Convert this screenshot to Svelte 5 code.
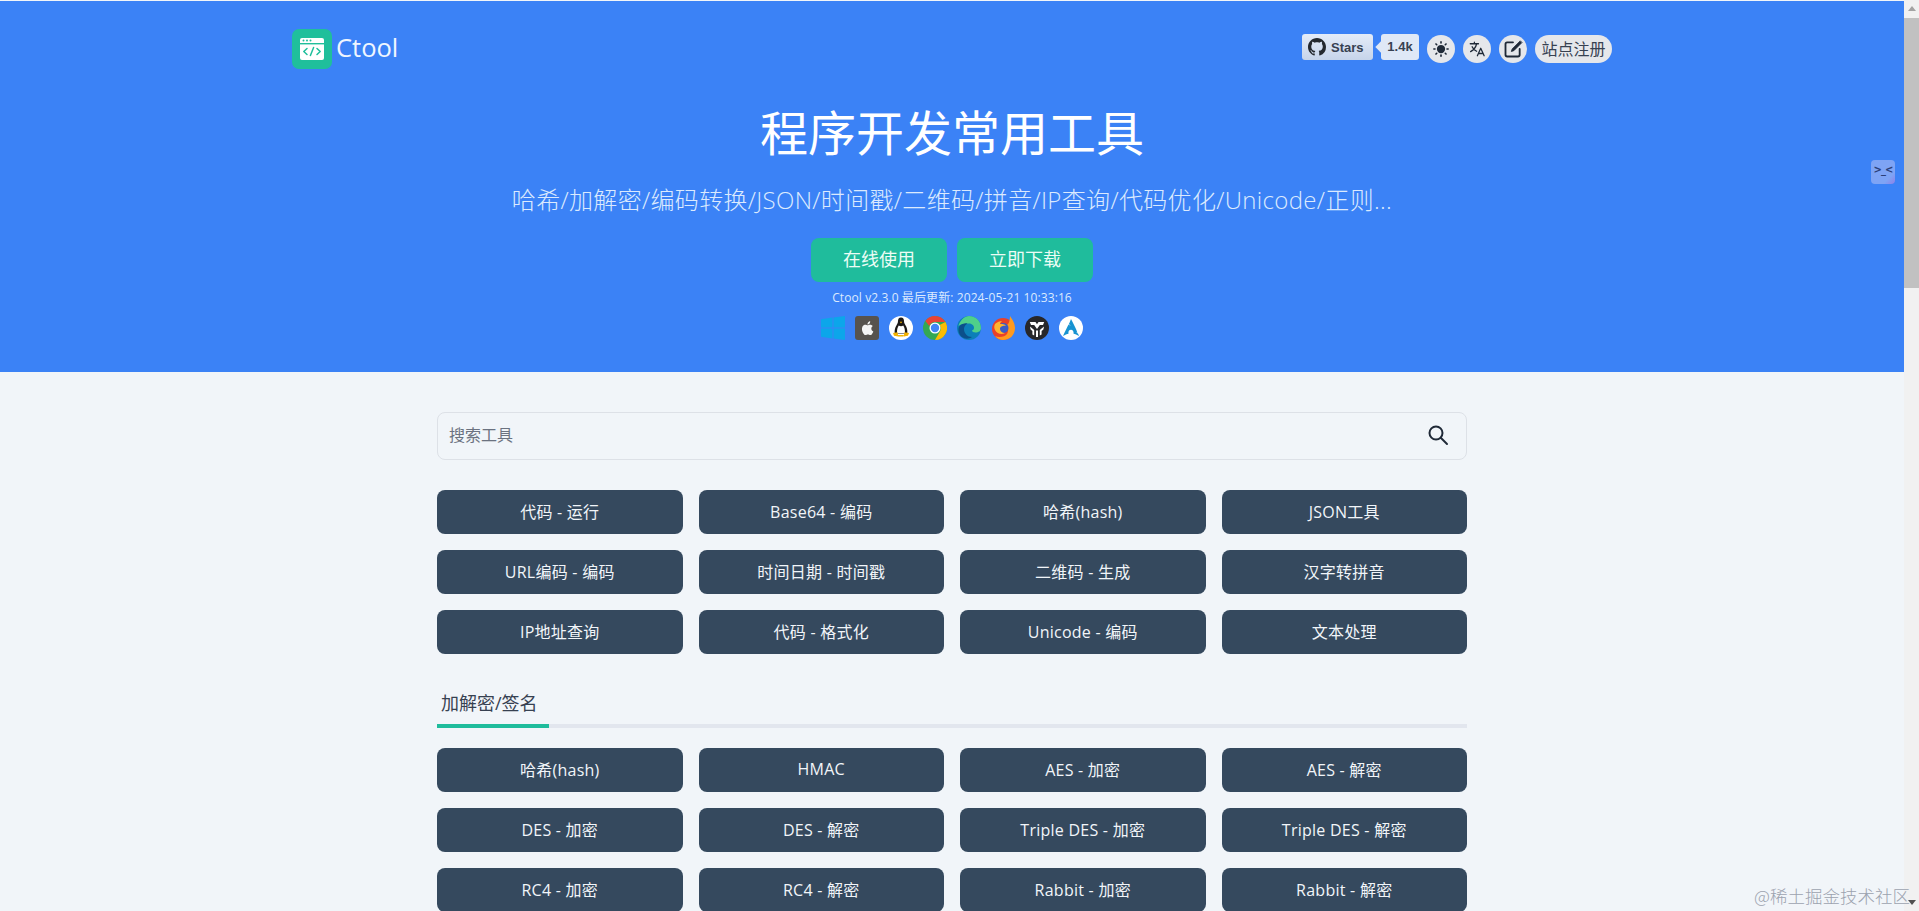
<script lang="ts">
  const hotTools = [
    "代码 - 运行", "Base64 - 编码", "哈希(hash)", "JSON工具",
    "URL编码 - 编码", "时间日期 - 时间戳", "二维码 - 生成", "汉字转拼音",
    "IP地址查询", "代码 - 格式化", "Unicode - 编码", "文本处理",
  ];
  const cryptoTools = [
    "哈希(hash)", "HMAC", "AES - 加密", "AES - 解密",
    "DES - 加密", "DES - 解密", "Triple DES - 加密", "Triple DES - 解密",
    "RC4 - 加密", "RC4 - 解密", "Rabbit - 加密", "Rabbit - 解密",
  ];
</script>

<div class="page">
  <div class="content">
    <header class="hero">
      <nav class="nav">
        <a class="brand" href="#top">
          <span class="logo">
            <svg width="26" height="24" viewBox="0 0 26 24">
              <rect x="1" y="1" width="24" height="22" rx="2" fill="#fff" />
              <rect x="1" y="6" width="24" height="1.4" fill="#1fbf9b" />
              <circle cx="4.5" cy="3.6" r="1" fill="#1fbf9b" />
              <circle cx="8" cy="3.6" r="1" fill="#1fbf9b" />
              <circle cx="11.5" cy="3.6" r="1" fill="#1fbf9b" />
              <path d="M8 11.5 4.8 14.5 8 17.5M18 11.5l3.2 3-3.2 3M14.6 10.5l-3.2 8" fill="none" stroke="#1fbf9b" stroke-width="1.5" stroke-linecap="round" stroke-linejoin="round" />
            </svg>
          </span>
          <span class="brand-name">Ctool</span>
        </a>
        <div class="actions">
          <span class="gh-btn">
            <svg width="18" height="18" viewBox="0 0 16 16"><path fill="#24292f" d="M8 0C3.58 0 0 3.58 0 8c0 3.54 2.29 6.53 5.47 7.59.4.07.55-.17.55-.38 0-.19-.01-.82-.01-1.49-2.01.37-2.53-.49-2.69-.94-.09-.23-.48-.94-.82-1.13-.28-.15-.68-.52-.01-.53.63-.01 1.08.58 1.23.82.72 1.21 1.87.87 2.33.66.07-.52.28-.87.51-1.07-1.78-.2-3.64-.89-3.64-3.95 0-.87.31-1.59.82-2.15-.08-.2-.36-1.02.08-2.12 0 0 .67-.21 2.2.82.64-.18 1.32-.27 2-.27s1.36.09 2 .27c1.53-1.04 2.2-.82 2.2-.82.44 1.1.16 1.92.08 2.12.51.56.82 1.27.82 2.15 0 3.07-1.87 3.75-3.65 3.95.29.25.54.73.54 1.48 0 1.07-.01 1.93-.01 2.2 0 .21.15.46.55.38A8.01 8.01 0 0 0 16 8c0-4.42-3.58-8-8-8z" /></svg>
            Stars
          </span>
          <span class="gh-count">1.4k</span>
          <button class="round" aria-label="主题">
            <svg width="18" height="18" viewBox="0 0 24 24" fill="#1f2937"><circle cx="12" cy="12" r="5.5" /><g stroke="#1f2937" stroke-width="2.2" stroke-linecap="round"><path d="M12 2.5v1.5M12 20v1.5M2.5 12H4M20 12h1.500M5.300 5.300l1 1M17.700 17.700l1 1M5.300 18.700l1-1M17.700 6.300l1-1" /></g></svg>
          </button>
          <button class="round" aria-label="语言">
            <svg width="18" height="18" viewBox="0 0 24 24" fill="none" stroke="#1f2937" stroke-width="1.7" stroke-linecap="round" stroke-linejoin="round"><path d="M3 5h11M8.500 3v2M11.500 5c-1 4.500-3.500 8-8 10.500M5.500 9c1 2.500 3 4.500 6 6M12.500 21l4.500-10 4.500 10M14 18h6" /></svg>
          </button>
          <button class="round" aria-label="编辑">
            <svg width="20" height="20" viewBox="0 0 24 24" fill="none" stroke="#1f2937" stroke-width="2.200" stroke-linecap="round" stroke-linejoin="round"><path d="M12 4H5a2 2 0 0 0-2 2v13a2 2 0 0 0 2 2h13a2 2 0 0 0 2-2v-7" /><path d="M20.500 2.500 11 12l-1 3 3-1 9.500-9.500z" fill="#1f2937" stroke-width="1" /></svg>
          </button>
          <button class="pill">站点注册</button>
        </div>
      </nav>

      <h1 class="title">程序开发常用工具</h1>
      <p class="subtitle">哈希/加解密/编码转换/JSON/时间戳/二维码/拼音/IP查询/代码优化/Unicode/正则...</p>
      <div class="cta">
        <a class="cta-btn" href="#top">在线使用</a>
        <a class="cta-btn" href="#top">立即下载</a>
      </div>
      <p class="version">Ctool v2.3.0 最后更新: 2024-05-21 10:33:16</p>
      <div class="platforms">
        <!-- windows -->
        <svg width="24" height="24" viewBox="0 0 24 24" fill="#0ca6ea"><path d="M0 3.200 11.500 1.600v9.900H0zM12.500 1.500 24 0v11.500H12.500zM0 12.500h11.500v9.900L0 20.800zM12.500 12.500H24V24l-11.500-1.500z" /></svg>
        <!-- apple -->
        <svg width="24" height="24" viewBox="0 0 24 24"><rect width="24" height="24" rx="3" fill="#57534e" /><path fill="#f5f5f5" d="M16.300 12.700c0-1.700 1.400-2.500 1.500-2.600-.8-1.200-2.100-1.300-2.500-1.400-1.100-.1-2.100.6-2.600.6-.6 0-1.400-.6-2.300-.6-1.200 0-2.300.7-2.900 1.700-1.200 2.100-.3 5.300.9 7 .6.800 1.300 1.800 2.200 1.700.9 0 1.200-.6 2.300-.6s1.400.6 2.300.6c1 0 1.600-.8 2.100-1.700.7-1 1-1.900 1-2-.1 0-2-.7-2-2.700zM14.500 7.500c.5-.6.800-1.400.7-2.200-.7 0-1.500.5-2 1-.4.500-.8 1.300-.7 2.100.8.100 1.500-.4 2-.9z" /></svg>
        <!-- linux -->
        <svg width="24" height="24" viewBox="0 0 24 24"><circle cx="12" cy="12" r="12" fill="#fff" /><path fill="#1c1917" d="M12 1.500c-2.200 0-3 1.700-3 3.600 0 1.800-.6 2.800-1.600 4.300C6.200 11.200 5.300 14 5.700 17.500h12.600c.4-3.500-.5-6.300-1.700-8.100C15.600 7.900 15 6.900 15 5.100c0-1.900-.8-3.600-3-3.600z" /><path fill="#fff" d="M9.800 9.500c-1.300 1.800-2 4.500-1.700 7.500h7.800c.3-3-.4-5.700-1.700-7.500-.9.900-3.500.9-4.400 0z" /><path fill="#f5b301" d="M10.700 5.800h2.600L12 7.500zM4 17l4.500-.8.900 4.300-4.400-.8zM20 17l-4.500-.8-.9 4.300 4.400-.8zM9 19h6v1.500H9z" /></svg>
        <!-- chrome -->
        <svg width="24" height="24" viewBox="0 0 24 24"><circle cx="12" cy="12" r="12" fill="#34a853" /><path fill="#ea4335" d="M12 0a12 12 0 0 1 10.400 6H12a6 6 0 0 0-5.700 4.100L2.400 5A12 12 0 0 1 12 0z" /><path fill="#fbbc04" d="M22.400 6a12 12 0 0 1-10.400 18l5.200-9a6 6 0 0 0-.5-6z" /><circle cx="12" cy="12" r="5.500" fill="#fff" /><circle cx="12" cy="12" r="4.200" fill="#4285f4" /></svg>
        <!-- edge -->
        <svg width="24" height="24" viewBox="0 0 24 24"><circle cx="12" cy="12" r="12" fill="#0c7fb8" /><path fill="#4fd08a" d="M1.500 10C3 4 8 0 12 0c7 0 12 5 12 12 0 3-2.500 4.500-5.500 4.500-2 0-3.500-.8-3.500-2 1.500-.5 2-1.500 2-2.800 0-2.500-2.500-4.200-5-4.200-5 0-9 1-10.500 2.500z" /><path fill="#0b4f8a" d="M7 13c0 4.500 3.500 8 8 8-4 3-11 2-13-4-.8-2.500-.8-5 .5-7C4.500 8 8 6.800 10.500 7.500 8.500 8.500 7 10.500 7 13z" /></svg>
        <!-- firefox -->
        <svg width="24" height="24" viewBox="0 0 24 24"><circle cx="12" cy="13" r="11" fill="#e8412a" /><path fill="#ff9a1f" d="M19 0c2 3 5 7 5 12 0 7-5 12-12 12-3 0-6-1.500-8-4 4 2 10 1 12-2 2-3 1-7-1-9 3 0 4-5 4-9z" /><circle cx="12.500" cy="12" r="5" fill="#3a5bc7" /><path fill="#ffb52e" d="M4 8c2-2 5-3 7-3-1 1-2 2-2 3 2 0 5 0 6 2-2-.5-6 0-6 3 0 2 2 4 5 4-3 2-8 1-10-3-1-2-1-4 0-6z" /></svg>
        <!-- utools -->
        <svg width="24" height="24" viewBox="0 0 24 24"><circle cx="12" cy="12" r="12" fill="#27272a" /><g fill="#fff"><path d="M4.800 6h5.700l1.500 2.200L13.500 6h5.700l-1.200 3h-3.200L12 13 9.200 9H6z" /><path d="M11 14.500h2V21h-2zM5 10.500l4.200 3.500v5.500l-1.800-1V15L5.600 13.500zM19 10.500 14.800 14v5.500l1.800-1V15l1.800-1.500z" /></g></svg>
        <!-- arch -->
        <svg width="24" height="24" viewBox="0 0 24 24"><circle cx="12" cy="12" r="12" fill="#fff" /><path fill="#1793d1" d="M12 3c-.7 1.800-1.200 3-2.100 5 .5.600 1.200 1.200 2.300 1.900-1.200-.5-2-1-2.700-1.500C8.200 11.200 6.200 15 4 20c2.100-1.200 3.800-2 5.500-2.300-.1-.4-.1-.6-.1-.9v-.1c0-1.700.9-3 2.600-3s2.600 1.600 2.600 3.200c0 .3 0 .6-.1.800 1.700.3 3.400 1.100 5.700 2.300-.4-.9-.9-1.600-1.200-2.300-.6-.6-1.300-1.100-2.300-1.700.7.200 1.200.300 1.700.7C17 12.300 15 9 12 3z" /></svg>
      </div>
    </header>

    <main class="main">
      <div class="search">
        <input class="search-input" type="text" placeholder="搜索工具" />
        <svg class="search-icon" width="22" height="22" viewBox="0 0 22 22" fill="none" stroke="#1f2937" stroke-width="2" stroke-linecap="round"><circle cx="9" cy="9" r="6.500" /><path d="M14 14l6 6" /></svg>
      </div>

      <div class="grid">
        {#each hotTools as tool}
          <button class="tool">{tool}</button>
        {/each}
      </div>

      <section class="group">
        <h2 class="group-title">加解密/签名</h2>
        <div class="group-bar"><span class="group-bar-fill"></span></div>
        <div class="grid">
          {#each cryptoTools as tool}
            <button class="tool">{tool}</button>
          {/each}
        </div>
      </section>
    </main>
  </div>

  <div class="scrollbar">
    <span class="arrow-up"></span>
    <span class="thumb"></span>
    <span class="arrow-down"></span>
  </div>

  <!-- floating widget and image watermark -->
  <div class="float-face">&gt;_&lt;</div>
  <div class="watermark">@稀土掘金技术社区</div>
</div>

<style>
:global(body) {
  margin: 0;
  background: #f1f5f9;
}

.page {
  position: relative;
  display: flex;
  height: 100vh;
  overflow: hidden;
  font-family: "Open Sans", "Noto Sans CJK SC", sans-serif;
}

.content {
  flex: 1;
  min-width: 0;
  overflow: hidden;
  background: #f1f5f9;
}

.hero {
  height: 371px;
  margin-top: 1px;
  background: #3b82f6;
  color: #fff;
  text-align: center;
}

.nav {
  width: 1320px;
  height: 68px;
  margin: 0 auto;
  padding-top: 28px;
  box-sizing: border-box;
  display: flex;
  justify-content: space-between;
}

.brand {
  display: flex;
  align-items: center;
  gap: 4px;
  height: 40px;
  color: #fff;
  text-decoration: none;
}

.logo {
  width: 40px;
  height: 40px;
  border-radius: 7px;
  background: #1fbf9b;
  display: flex;
  align-items: center;
  justify-content: center;
}

.brand-name {
  padding-bottom: 4px;
  font-size: 25.5px;
  color: #eff6ff;
}

.actions {
  display: flex;
  align-items: flex-start;
  padding-top: 5px;
}

.gh-btn {
  width: 71px;
  height: 26px;
  box-sizing: border-box;
  display: flex;
  align-items: center;
  gap: 5px;
  padding-left: 6px;
  border-radius: 3px;
  background: linear-gradient(#e4ecf8, #c6d4ea);
  color: #374151;
  font: bold 13px "Liberation Sans", sans-serif;
}

.gh-count {
  position: relative;
  width: 38px;
  height: 26px;
  margin-left: 8px;
  margin-right: 8px;
  border-radius: 3px;
  background: #dfe8f6;
  color: #374151;
  font: bold 13px/26px "Liberation Sans", sans-serif;
}

.gh-count::before {
  content: "";
  position: absolute;
  left: -4px;
  top: 9px;
  width: 8px;
  height: 8px;
  background: #dfe8f6;
  transform: rotate(45deg);
}

.round {
  width: 28px;
  height: 28px;
  margin-right: 8px;
  margin-top: 1px;
  padding: 0;
  border: 0;
  border-radius: 50%;
  background: #e5e7eb;
  display: flex;
  align-items: center;
  justify-content: center;
}

.pill {
  width: 77px;
  height: 28px;
  margin-top: 1px;
  padding: 0 0 2px;
  border: 0;
  border-radius: 14px;
  background: #e5e7eb;
  color: #374151;
  font-size: 16px;
  font-family: inherit;
  white-space: nowrap;
}

.title {
  margin: 30px 0 0;
  font-size: 48px;
  line-height: 68px;
  font-weight: 400;
  color: #fff;
}

.subtitle {
  margin: 15px 0 0;
  font-size: 24px;
  line-height: 36px;
  font-weight: 300;
  letter-spacing: 0.33px;
  color: #dbeafe;
}

.cta {
  display: flex;
  justify-content: center;
  gap: 10px;
  margin-top: 20px;
}

.cta-btn {
  width: 136px;
  height: 44px;
  border-radius: 8px;
  background: #1fbc9c;
  color: #ecfdf5;
  font-size: 18px;
  line-height: 42px;
  text-decoration: none;
}

.version {
  margin: 7px 0 0;
  font-size: 12px;
  line-height: 18px;
  letter-spacing: 0.1px;
  color: #dbeafe;
}

.platforms {
  display: flex;
  justify-content: center;
  gap: 10px;
  margin-top: 9px;
}

.main {
  width: 1030px;
  margin: 0 auto;
  padding-top: 40px;
}

.search {
  position: relative;
}

.search-input {
  display: block;
  width: 100%;
  height: 48px;
  box-sizing: border-box;
  padding: 0 11px 2px;
  border: 1px solid #dde1e7;
  border-radius: 8px;
  background: #f1f5f9;
  font-size: 16px;
  font-family: inherit;
  outline: none;
}

.search-input::placeholder {
  color: #6b7280;
}

.search-icon {
  position: absolute;
  right: 18px;
  top: 12px;
}

.grid {
  display: grid;
  grid-template-columns: repeat(4, 1fr);
  gap: 16px;
  margin-top: 30px;
}

.tool {
  height: 44px;
  padding: 0 0 2px;
  border: 0;
  border-radius: 8px;
  background: #35495e;
  color: #f1f5f9;
  font-size: 16px;
  font-family: inherit;
  letter-spacing: 0.25px;
}

.group {
  margin-top: 34px;
}

.group-title {
  margin: 0;
  padding-left: 4px;
  font-size: 18px;
  line-height: 30px;
  font-weight: 400;
  color: #374151;
}

.group-bar {
  height: 4px;
  margin-top: 6px;
  background: #e2e6ee;
}

.group-bar-fill {
  display: block;
  width: 112px;
  height: 4px;
  background: #1fbc9c;
}

.group .grid {
  margin-top: 20px;
}

.scrollbar {
  width: 15px;
  flex: none;
  padding-top: 6px;
  box-sizing: border-box;
  display: flex;
  flex-direction: column;
  align-items: center;
  background: #f1f1f1;
}

.arrow-up {
  width: 0;
  height: 0;
  border: 4px solid transparent;
  border-top: 0;
  border-bottom: 5px solid #a3a3a3;
}

.thumb {
  width: 100%;
  height: 270px;
  margin-top: 7px;
  background: #c1c1c1;
}

.arrow-down {
  margin-top: auto;
  margin-bottom: 6px;
  width: 0;
  height: 0;
  border: 4px solid transparent;
  border-bottom: 0;
  border-top: 5px solid #505050;
}

.float-face {
  position: absolute;
  left: 1871px;
  top: 160px;
  width: 24px;
  height: 24px;
  border-radius: 4px;
  background: linear-gradient(135deg, #7ea4f5 75%, #8f7fe8);
  color: #2b3f78;
  font: bold 10px/20px "DejaVu Sans", sans-serif;
  letter-spacing: -1px;
  text-align: center;
}

.watermark {
  position: absolute;
  right: 9px;
  bottom: 4px;
  font-family: "Noto Sans CJK SC", sans-serif;
  font-size: 17.5px;
  line-height: 22px;
  font-weight: 300;
  color: #9ca3af;
}
</style>
